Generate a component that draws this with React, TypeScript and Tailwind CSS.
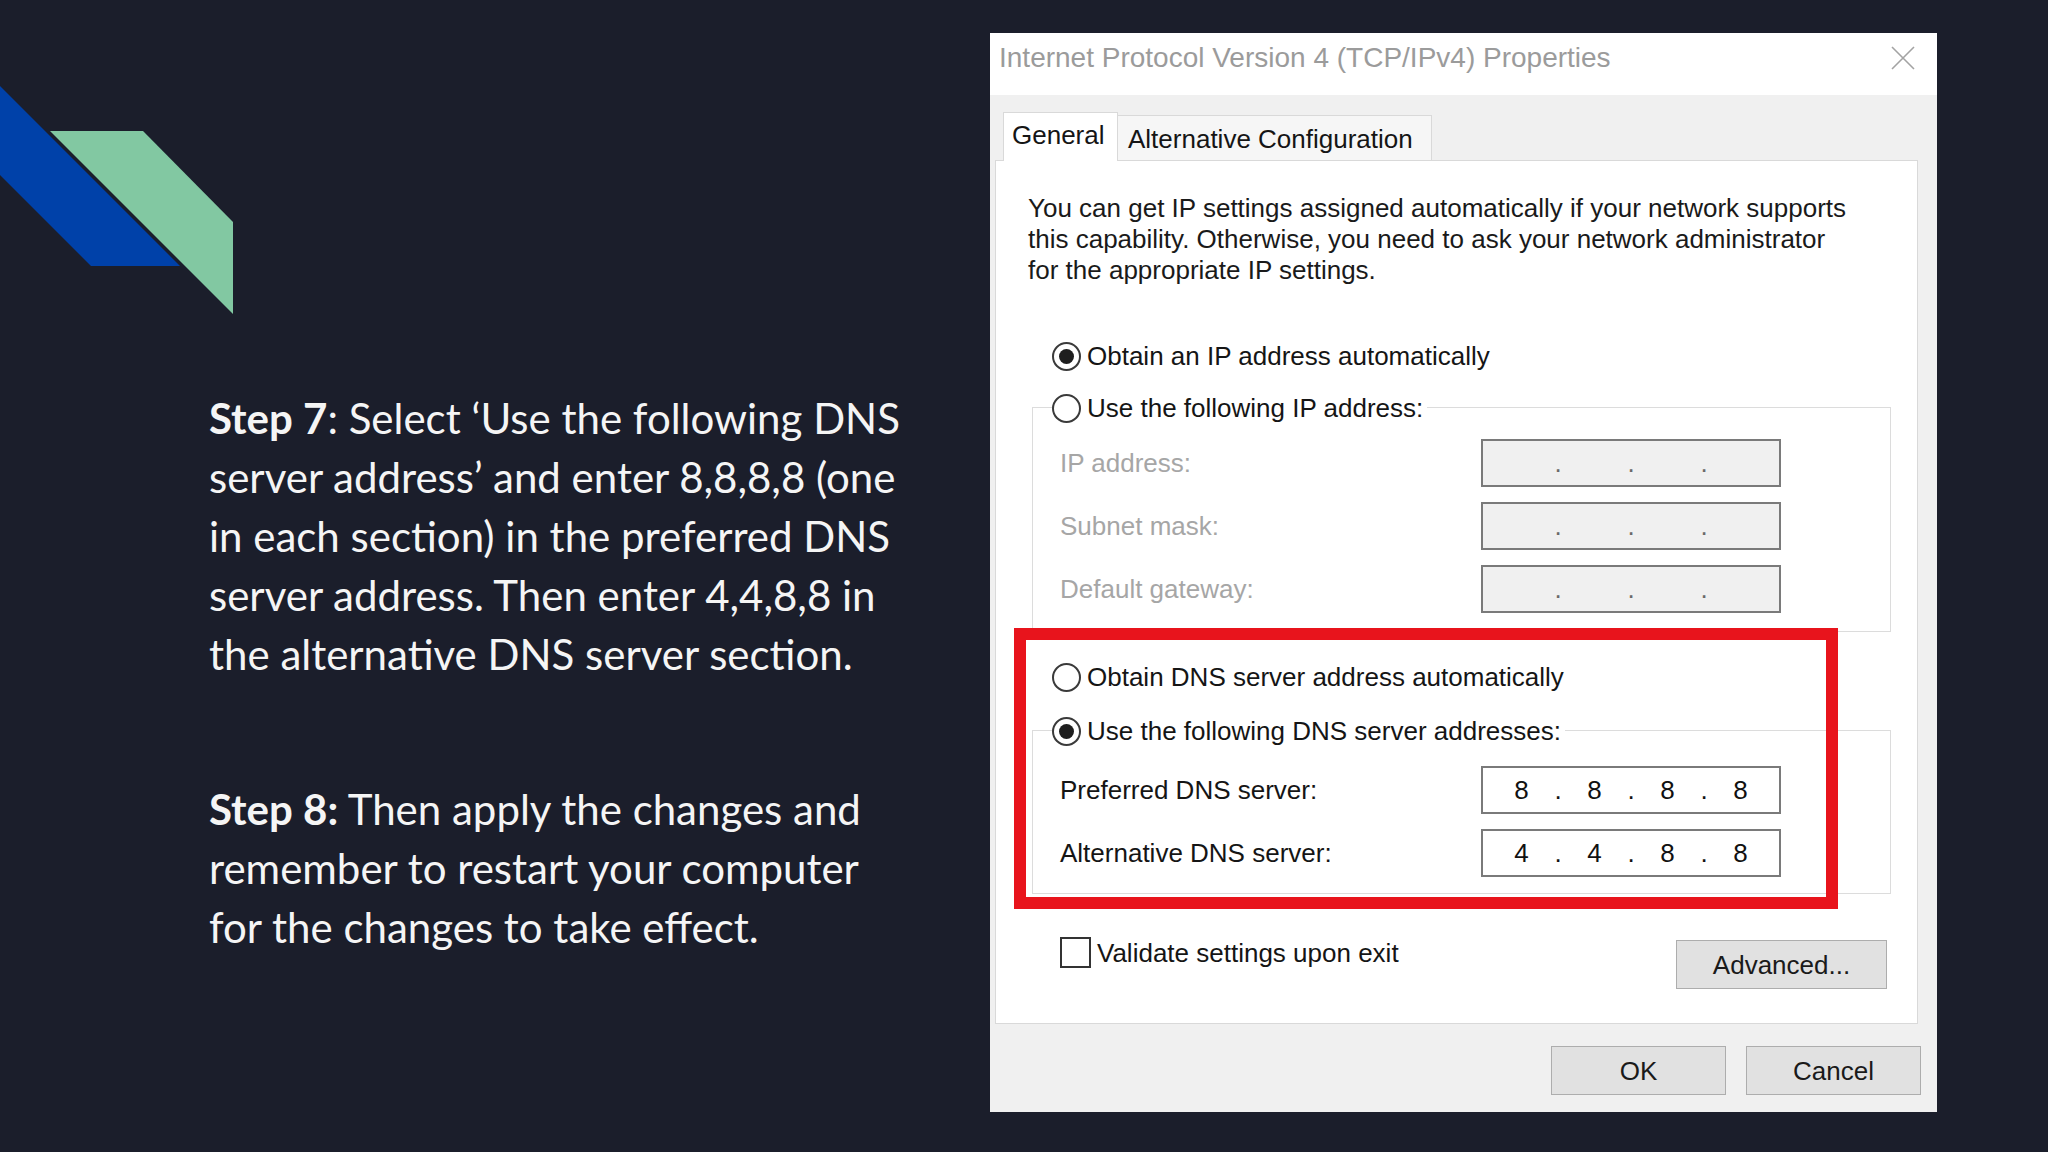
import React from "react";

// ============================================
// Slide: DNS settings, steps 7 and 8
// ============================================

function Radio({ checked }: { checked?: boolean }) {
  return (
    <span className="w-[29px] h-[29px] rounded-full border-2 border-[#3a3a3a] bg-white flex items-center justify-center shrink-0">
      {checked && <span className="w-[15px] h-[15px] rounded-full bg-[#1e1e1e]" />}
    </span>
  );
}

function IpBox({ values, disabled }: { values?: string[]; disabled?: boolean }) {
  const parts = values ?? ["", "", "", ""];
  return (
    <div
      className={`w-[300px] h-[48px] border-2 border-[#7a7a7a] flex items-center justify-center ${
        disabled ? "bg-[#f0f0f0] text-[#6a6a6a]" : "bg-white text-[#111]"
      }`}
    >
      {parts.map((p, i) => (
        <React.Fragment key={i}>
          <span className="w-[36px] text-center">{p}</span>
          {i < 3 && <span className="w-[37px] text-center">.</span>}
        </React.Fragment>
      ))}
    </div>
  );
}

function FieldRow({
  label,
  values,
  disabled,
}: {
  label: string;
  values?: string[];
  disabled?: boolean;
}) {
  return (
    <div className="flex items-center h-[48px]">
      <span className={`w-[448px] pl-[27px] ${disabled ? "text-[#a6a6a6]" : "text-[#151515]"}`}>
        {label}
      </span>
      <IpBox values={values} disabled={disabled} />
    </div>
  );
}

function Legend({ checked, text }: { checked?: boolean; text: string }) {
  return (
    <div className="-mt-[20px] ml-[19px] h-[40px] w-fit pr-[4px] bg-white flex items-center gap-[6px]">
      <Radio checked={checked} />
      <span>{text}</span>
    </div>
  );
}

function WinButton({ label, w }: { label: string; w: string }) {
  return (
    <div
      className={`${w} h-[49px] bg-[#e1e1e1] border border-[#adadad] flex items-center justify-center text-[#1a1a1a]`}
    >
      {label}
    </div>
  );
}

function Decoration() {
  return (
    <svg className="absolute top-0 left-0" width="240" height="320" viewBox="0 0 240 320">
      <polygon points="0,86 180,266 91,266 0,175" fill="#0041a9" />
      <polygon points="50,131 143,131 233,222 233,314" fill="#82c8a2" />
    </svg>
  );
}

function PropertiesDialog() {
  return (
    <div className="mt-[33px] w-[947px] h-[1079px] flex flex-col bg-[#f0f0f0] font-['Liberation_Sans',Arial,sans-serif] text-[26px] text-[#151515] leading-none">
      {/* title bar */}
      <div className="h-[62px] bg-white flex items-center justify-between pl-[9px] pr-[22px] pb-[12px]">
        <span className="text-[#9b9b9b] text-[28px]">Internet Protocol Version 4 (TCP/IPv4) Properties</span>
        <svg width="24" height="24" viewBox="0 0 24 24">
          <path d="M1 1 L23 23 M23 1 L1 23" stroke="#a3a3a3" strokeWidth="1.6" />
        </svg>
      </div>

      {/* tabs */}
      <div className="h-[65px] flex items-end pl-[13px]">
        <div className="w-[115px] h-[49px] bg-white border border-b-0 border-[#d9d9d9] flex items-center pl-[8px] pb-[4px] relative z-10 -mb-px">
          General
        </div>
        <div className="w-[314px] h-[45px] bg-[#f6f6f6] border border-b-0 border-l-0 border-[#d9d9d9] flex items-center pl-[10px] pt-[2px]">
          Alternative Configuration
        </div>
      </div>

      {/* tab page */}
      <div className="ml-[5px] w-[923px] h-[864px] bg-white border border-[#d9d9d9] relative">
        <p className="pt-[32px] pl-[32px] leading-[31px] text-[#1a1a1a] whitespace-nowrap">
          You can get IP settings assigned automatically if your network supports
          <br />
          this capability. Otherwise, you need to ask your network administrator
          <br />
          for the appropriate IP settings.
        </p>

        <div className="mt-[50px] ml-[56px] h-[40px] flex items-center gap-[6px]">
          <Radio checked />
          <span>Obtain an IP address automatically</span>
        </div>

        <div className="mt-[31px] ml-[36px] w-[859px] h-[225px] border border-[#dcdcdc]">
          <Legend text="Use the following IP address:" />
          <div className="mt-[11px] flex flex-col gap-[15px]">
            <FieldRow label="IP address:" disabled />
            <FieldRow label="Subnet mask:" disabled />
            <FieldRow label="Default gateway:" disabled />
          </div>
        </div>

        <div className="mt-[25px] ml-[56px] h-[40px] flex items-center gap-[6px]">
          <Radio />
          <span>Obtain DNS server address automatically</span>
        </div>

        <div className="mt-[33px] ml-[36px] w-[859px] h-[164px] border border-[#dcdcdc]">
          <Legend checked text="Use the following DNS server addresses:" />
          <div className="mt-[15px] flex flex-col gap-[15px]">
            <FieldRow label="Preferred DNS server:" values={["8", "8", "8", "8"]} />
            <FieldRow label="Alternative DNS server:" values={["4", "4", "8", "8"]} />
          </div>
        </div>

        <div className="mt-[43px] ml-[64px] mr-[30px] flex items-start justify-between">
          <div className="flex items-center gap-[6px] h-[31px]">
            <span className="w-[31px] h-[31px] border-2 border-[#333] bg-white" />
            <span>Validate settings upon exit</span>
          </div>
          <div className="mt-[3px]">
            <WinButton label="Advanced..." w="w-[211px]" />
          </div>
        </div>

        {/* highlight */}
        <div className="absolute left-[18px] top-[467px] w-[824px] h-[281px] border-[12px] border-[#e8141c]" />
      </div>

      {/* dialog buttons */}
      <div className="mt-[22px] flex justify-end gap-[20px] pr-[16px]">
        <WinButton label="OK" w="w-[175px]" />
        <WinButton label="Cancel" w="w-[175px]" />
      </div>
    </div>
  );
}

export default function App() {
  return (
    <div className="w-[2048px] h-[1152px] bg-[#1b1e2b] relative flex overflow-hidden">
      <Decoration />
      <div className="w-[990px] shrink-0 pl-[209px] pt-[389px] font-['Lato',sans-serif] text-[42px] leading-[59px] text-[#f5f5f5] whitespace-nowrap">
        <p>
          <span className="font-bold">Step 7</span>: Select ‘Use the following DNS
          <br />
          server address’ and enter 8,8,8,8 (one
          <br />
          in each section) in the preferred DNS
          <br />
          server address. Then enter 4,4,8,8 in
          <br />
          the alternative DNS server section.
        </p>
        <p className="mt-[96px]">
          <span className="font-bold">Step 8:</span> Then apply the changes and
          <br />
          remember to restart your computer
          <br />
          for the changes to take effect.
        </p>
      </div>
      <PropertiesDialog />
    </div>
  );
}
